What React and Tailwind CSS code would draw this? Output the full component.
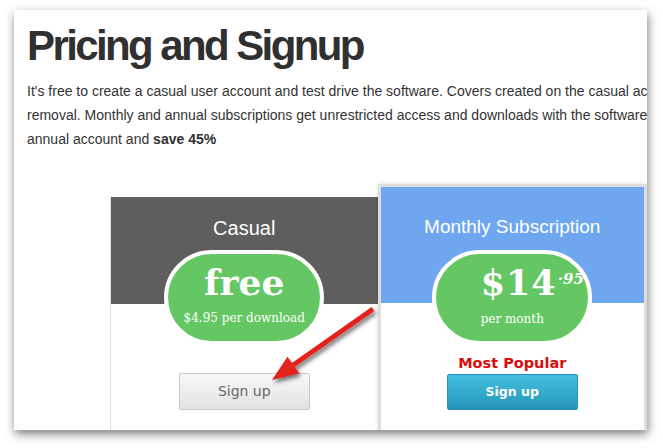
export default function App() {
  return (
    <div className="w-[663px] h-[448px] bg-white pt-[10px] pl-[14px]">
      <div className="relative w-[633px] h-[420px] overflow-hidden bg-white shadow-[1px_4px_9px_rgba(0,0,0,0.5)]">
        <h1 className="ml-[13px] mt-[15px] text-[42px] leading-[42px] font-bold tracking-[-2.6px] text-[#303030] whitespace-nowrap" style={{ fontFamily: '"Liberation Sans", Arial, sans-serif' }}>
          Pricing and Signup
        </h1>
        <div className="ml-[13px] mt-[12px] text-[14px] leading-[24px] text-[#333] whitespace-nowrap" style={{ fontFamily: '"Liberation Sans", Arial, sans-serif' }}>
          <p>It's free to create a casual user account and test drive the software. Covers created on the casual account will carry a watermark</p>
          <p>removal. Monthly and annual subscriptions get unrestricted access and downloads with the software tool. Sign up for the</p>
          <p>annual account and <b>save 45%</b></p>
        </div>

        <div className="flex items-start ml-[96px] mt-[33px]">
          {/* Casual */}
          <div className="mt-[13px] w-[268px] h-[300px] border-l border-[#dddddd] bg-[linear-gradient(#5e5e5e_0_107px,#ffffff_107px)] flex flex-col items-center pt-[19px]">
            <div className="text-white text-[20px] leading-[24px]" style={{ fontFamily: '"Liberation Sans", Arial, sans-serif' }}>Casual</div>
            <div className="mt-[10px] w-[160px] h-[95px] rounded-[48px] border-[4px] border-white bg-[#64c764] flex flex-col items-center text-white" style={{ fontFamily: '"DejaVu Serif", Georgia, serif' }}>
              <div className="mt-[9px] text-[36px] leading-[38px] font-bold">free</div>
              <div className="mt-[9px] text-[12px] leading-[16px]">$4.95 per download</div>
            </div>
            <button className="mt-[28px] w-[131px] h-[37px] rounded-[2px] border border-[#c9c9c9] bg-[linear-gradient(#f9f9f9,#e1e1e1)] text-[#686868] text-[14px]" style={{ fontFamily: '"DejaVu Sans", sans-serif' }}>
              Sign up
            </button>
          </div>

          {/* Monthly */}
          <div className="w-[270px] h-[300px] border-[3px] border-b-0 border-[#dedede] bg-[linear-gradient(#6ea7ef_0_116px,#ffffff_116px)] flex flex-col items-center pt-[28px] shadow-[0_0_4px_rgba(0,0,0,0.15)]">
            <div className="text-white text-[19px] leading-[24px]" style={{ fontFamily: '"Liberation Sans", Arial, sans-serif' }}>Monthly Subscription</div>
            <div className="mt-[11px] w-[160px] h-[95px] rounded-[48px] border-[4px] border-white bg-[#64c764] flex flex-col items-center text-white" style={{ fontFamily: '"DejaVu Serif", Georgia, serif' }}>
              <div className="mt-[11px] flex items-start pl-[40px]">
                <span className="text-[35px] leading-[36px] font-bold tracking-[1px]">$14</span>
                <span className="mt-[5px] ml-[1px] text-[15px] leading-[18px] font-bold italic">·95</span>
              </div>
              <div className="mt-[10px] text-[12px] leading-[16px]">per month</div>
            </div>
            <div className="mt-[9px] text-[#d70d0d] text-[14.5px] leading-[18px] font-bold" style={{ fontFamily: '"DejaVu Sans", sans-serif' }}>Most Popular</div>
            <button className="mt-[2px] w-[131px] h-[36px] rounded-[2px] border border-[#2a8fb2] bg-[linear-gradient(#45c0e2,#2596b9)] text-white text-[12.5px] font-bold" style={{ fontFamily: '"DejaVu Sans", sans-serif' }}>
              Sign up
            </button>
          </div>
        </div>

        <svg className="absolute left-0 top-0 pointer-events-none" width="633" height="420" viewBox="0 0 633 420">
          <defs>
            <filter id="sh" x="-20%" y="-20%" width="140%" height="140%">
              <feDropShadow dx="2" dy="3" stdDeviation="2" floodColor="#000" floodOpacity="0.55" />
            </filter>
          </defs>
          <g filter="url(#sh)" fill="#e3201f">
            <polygon points="360.4,301.1 357.6,296.9 277.9,352.9 280.7,357.1" />
            <polygon points="258,370 285.1,363.2 273.5,346.8" />
          </g>
        </svg>
      </div>
    </div>
  );
}
